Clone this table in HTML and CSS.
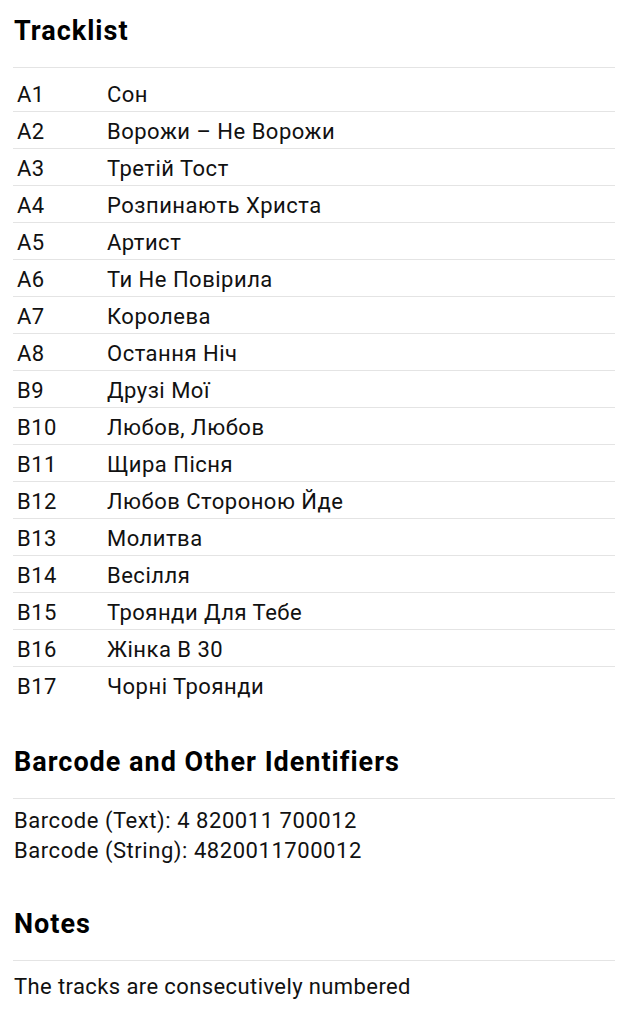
FILE: index.html
```html
<!DOCTYPE html>
<html lang="uk">
<head>
<meta charset="utf-8">
<title>Tracklist</title>
<link rel="stylesheet" href="styles.css">
</head>
<body>
<main class="page">
  <section class="section section-tracklist">
    <h2 class="section-title">Tracklist</h2>
    <div class="tracklist">
      <div class="track"><span class="track-pos">A1</span><span class="track-title">Сон</span></div>
      <div class="track"><span class="track-pos">A2</span><span class="track-title">Ворожи – Не Ворожи</span></div>
      <div class="track"><span class="track-pos">A3</span><span class="track-title">Третій Тост</span></div>
      <div class="track"><span class="track-pos">A4</span><span class="track-title">Розпинають Христа</span></div>
      <div class="track"><span class="track-pos">A5</span><span class="track-title">Артист</span></div>
      <div class="track"><span class="track-pos">A6</span><span class="track-title">Ти Не Повірила</span></div>
      <div class="track"><span class="track-pos">A7</span><span class="track-title">Королева</span></div>
      <div class="track"><span class="track-pos">A8</span><span class="track-title">Остання Ніч</span></div>
      <div class="track"><span class="track-pos">B9</span><span class="track-title">Друзі Мої</span></div>
      <div class="track"><span class="track-pos">B10</span><span class="track-title">Любов, Любов</span></div>
      <div class="track"><span class="track-pos">B11</span><span class="track-title">Щира Пісня</span></div>
      <div class="track"><span class="track-pos">B12</span><span class="track-title">Любов Стороною Йде</span></div>
      <div class="track"><span class="track-pos">B13</span><span class="track-title">Молитва</span></div>
      <div class="track"><span class="track-pos">B14</span><span class="track-title">Весілля</span></div>
      <div class="track"><span class="track-pos">B15</span><span class="track-title">Троянди Для Тебе</span></div>
      <div class="track"><span class="track-pos">B16</span><span class="track-title">Жінка В 30</span></div>
      <div class="track"><span class="track-pos">B17</span><span class="track-title">Чорні Троянди</span></div>
    </div>
  </section>
  <section class="section">
    <h2 class="section-title">Barcode and Other Identifiers</h2>
    <ul class="identifiers">
      <li>Barcode (Text): 4 820011 700012</li>
      <li>Barcode (String): 4820011700012</li>
    </ul>
  </section>
  <section class="section">
    <h2 class="section-title">Notes</h2>
    <p class="notes">The tracks are consecutively numbered</p>
  </section>
</main>
</body>
</html>
```
FILE: styles.css
```css
* { box-sizing: border-box; }
html, body { margin: 0; padding: 0; background: #fff; }
body {
  font-family: Roboto, "Noto Sans", "Liberation Sans", sans-serif;
  color: #111;
}
.page {
  padding: 14px 12px 0 13px;
}
.section-tracklist { margin-bottom: 44px; }
.section { margin-bottom: 41px; }
.section-title {
  margin: 0;
  padding: 1px 0 20px 1px;
  font-size: 27px;
  line-height: 32px;
  font-weight: 700;
  letter-spacing: 1px;
  color: #000;
  border-bottom: 1px solid #e4e4e4;
}
.tracklist {
  margin-top: 7px;
  display: flex;
  flex-direction: column;
}
.track {
  display: grid;
  grid-template-columns: 94px 1fr;
  height: 37px;
  padding-top: 3px;
  line-height: 33px;
  font-size: 22px;
  letter-spacing: 0.5px;
  border-bottom: 1px solid #e4e4e4;
}
.track:last-child { border-bottom: none; }
.track-pos { padding-left: 4px; }
.identifiers {
  list-style: none;
  margin: 7px 0 0;
  padding: 0 0 0 1px;
  font-size: 22px;
  letter-spacing: 0.55px;
  line-height: 30px;
}
.notes {
  margin: 11px 0 0;
  padding-left: 1px;
  font-size: 22px;
  letter-spacing: 0.4px;
  line-height: 30px;
}
```
